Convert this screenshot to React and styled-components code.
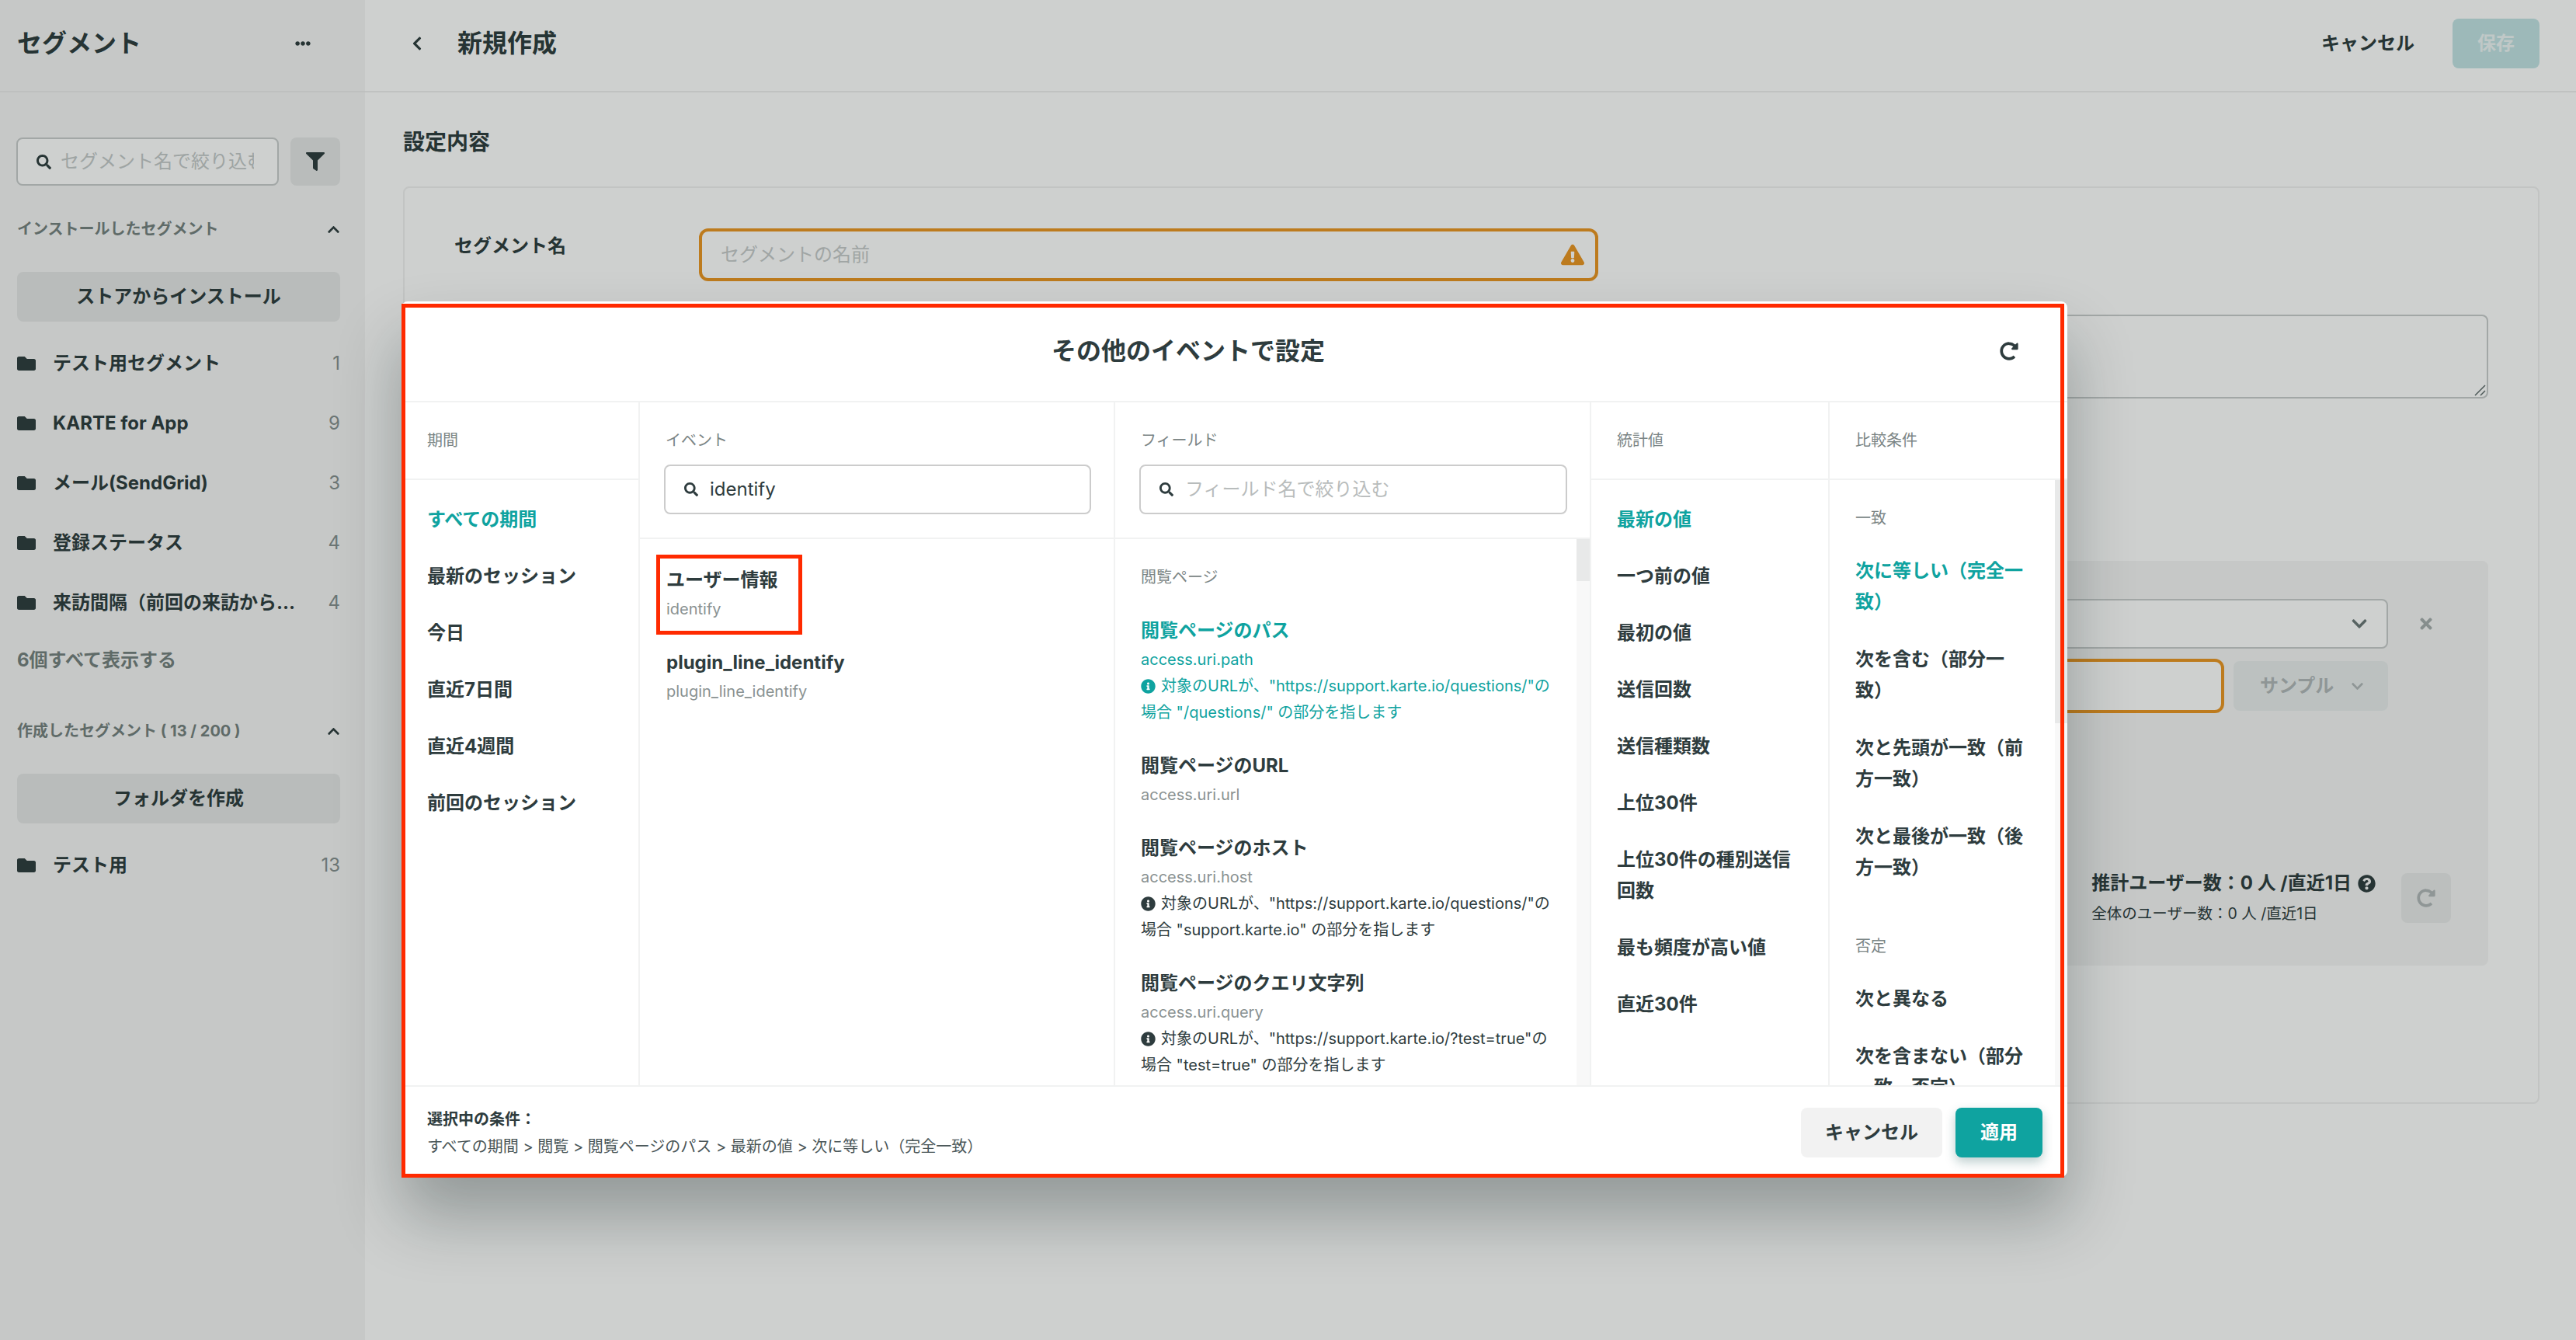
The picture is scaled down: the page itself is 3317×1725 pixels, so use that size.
import styled, { createGlobalStyle } from 'styled-components';
import {
  FaChevronDown,
  FaChevronLeft,
  FaChevronUp,
  FaEllipsisH,
  FaExclamationTriangle,
  FaFilter,
  FaFolder,
  FaInfoCircle,
  FaQuestionCircle,
  FaRedoAlt,
  FaSearch,
  FaTimes,
} from 'react-icons/fa';

const TEAL = '#0fa3a0';
const INK = '#2e3c3e';
const MUTED = '#7b8585';
const LINE = '#f1f2f2';

const installed = [
  ['テスト用セグメント', 1],
  ['KARTE for App', 9],
  ['メール(SendGrid)', 3],
  ['登録ステータス', 4],
  ['来訪間隔（前回の来訪から...', 4],
];

const periods = ['すべての期間', '最新のセッション', '今日', '直近7日間', '直近4週間', '前回のセッション'];

const stats = [
  '最新の値',
  '一つ前の値',
  '最初の値',
  '送信回数',
  '送信種類数',
  '上位30件',
  '上位30件の種別送信回数',
  '最も頻度が高い値',
  '直近30件',
];

const fields = [
  {
    title: '閲覧ページのパス',
    path: 'access.uri.path',
    note: '対象のURLが、"https://support.karte.io/questions/"の場合 "/questions/" の部分を指します',
    active: true,
  },
  { title: '閲覧ページのURL', path: 'access.uri.url' },
  {
    title: '閲覧ページのホスト',
    path: 'access.uri.host',
    note: '対象のURLが、"https://support.karte.io/questions/"の場合 "support.karte.io" の部分を指します',
  },
  {
    title: '閲覧ページのクエリ文字列',
    path: 'access.uri.query',
    note: '対象のURLが、"https://support.karte.io/?test=true"の場合 "test=true" の部分を指します',
  },
];

const App = () => {
  return (
    <>
      <GlobalStyle />
      <Page>
        <Sidebar>
          <SidebarHeader>
            <SidebarTitle>セグメント</SidebarTitle>
            <FaEllipsisH size={20} />
          </SidebarHeader>
          <SidebarBody>
            <SearchRow>
              <SidebarSearch>
                <FaSearch size={19} />
                <input placeholder="セグメント名で絞り込む" readOnly />
              </SidebarSearch>
              <FilterButton>
                <FaFilter size={24} />
              </FilterButton>
            </SearchRow>
            <SectionHead $top={42}>
              インストールしたセグメント
              <FaChevronUp size={17} />
            </SectionHead>
            <WideButton>ストアからインストール</WideButton>
            <FolderList>
              {installed.map(([name, count]) => (
                <FolderRow key={name}>
                  <FaFolder size={24} />
                  <FolderName>{name}</FolderName>
                  <FolderCount>{count}</FolderCount>
                </FolderRow>
              ))}
            </FolderList>
            <ShowAll>6個すべて表示する</ShowAll>
            <SectionHead $top={57}>
              作成したセグメント ( 13 / 200 )
              <FaChevronUp size={17} />
            </SectionHead>
            <WideButton>フォルダを作成</WideButton>
            <FolderList>
              <FolderRow>
                <FaFolder size={24} />
                <FolderName>テスト用</FolderName>
                <FolderCount>13</FolderCount>
              </FolderRow>
            </FolderList>
          </SidebarBody>
        </Sidebar>

        <Main>
          <MainHeader>
            <BackTitle>
              <FaChevronLeft size={20} />
              <PageTitle>新規作成</PageTitle>
            </BackTitle>
            <HeaderActions>
              <PlainAction>キャンセル</PlainAction>
              <SaveButton>保存</SaveButton>
            </HeaderActions>
          </MainHeader>
          <MainBody>
            <SectionTitle>設定内容</SectionTitle>
            <SettingsCard>
              <FieldRow>
                <FieldLabel>セグメント名</FieldLabel>
                <NameInput>
                  セグメントの名前
                  <FaExclamationTriangle size={30} />
                </NameInput>
              </FieldRow>
              <FieldRow $top={43}>
                <FieldLabel>説明</FieldLabel>
                <Description>
                  <ResizeGrip viewBox="0 0 16 16">
                    <path d="M2 15 15 2M9 15l6-6" />
                  </ResizeGrip>
                </Description>
              </FieldRow>
              <ConditionPanel>
                <SelectRow>
                  <SelectBox>
                    <FaChevronDown size={22} />
                  </SelectBox>
                  <RemoveSlot>
                    <FaTimes size={22} />
                  </RemoveSlot>
                </SelectRow>
                <ValueRow>
                  <ValueInput />
                  <SampleButton>
                    サンプル
                    <FaChevronDown size={17} />
                  </SampleButton>
                </ValueRow>
                <EstimateRow>
                  <div>
                    <EstimateMain>
                      推計ユーザー数：0 人 /直近1日
                      <FaQuestionCircle size={23} />
                    </EstimateMain>
                    <EstimateSub>全体のユーザー数：0 人 /直近1日</EstimateSub>
                  </div>
                  <RefreshButton>
                    <FaRedoAlt size={24} />
                  </RefreshButton>
                </EstimateRow>
              </ConditionPanel>
            </SettingsCard>
          </MainBody>
        </Main>

        <Scrim />

        <Modal>
          <ModalHeader>
            <ModalTitle>その他のイベントで設定</ModalTitle>
            <ModalReset>
              <FaRedoAlt size={24} />
            </ModalReset>
          </ModalHeader>
          <ModalColumns>
            <Column>
              <ColumnHead>
                <ColumnLabel>期間</ColumnLabel>
              </ColumnHead>
              <OptionList>
                {periods.map((item, i) => (
                  <Option key={item} $active={i === 0}>
                    {item}
                  </Option>
                ))}
              </OptionList>
            </Column>
            <Column>
              <ColumnHead $tall>
                <ColumnLabel>イベント</ColumnLabel>
                <ColumnSearch>
                  <FaSearch size={18} />
                  identify
                </ColumnSearch>
              </ColumnHead>
              <EventList>
                <EventItem>
                  <Highlight />
                  <ItemTitle>ユーザー情報</ItemTitle>
                  <ItemPath>identify</ItemPath>
                </EventItem>
                <EventItem>
                  <ItemTitle>plugin_line_identify</ItemTitle>
                  <ItemPath>plugin_line_identify</ItemPath>
                </EventItem>
              </EventList>
            </Column>
            <Column>
              <ColumnHead $tall>
                <ColumnLabel>フィールド</ColumnLabel>
                <ColumnSearch $empty>
                  <FaSearch size={18} />
                  フィールド名で絞り込む
                </ColumnSearch>
              </ColumnHead>
              <ScrollArea>
                <FieldList>
                  <ColumnLabel>閲覧ページ</ColumnLabel>
                  {fields.map(field => (
                    <FieldItem key={field.title} $active={field.active}>
                      <ItemTitle>{field.title}</ItemTitle>
                      <ItemPath>{field.path}</ItemPath>
                      {field.note && (
                        <ItemNote>
                          <FaInfoCircle size={19} />
                          {field.note}
                        </ItemNote>
                      )}
                    </FieldItem>
                  ))}
                </FieldList>
                <ScrollTrack $width={17}>
                  <ScrollThumb $height={54} />
                </ScrollTrack>
              </ScrollArea>
            </Column>
            <Column>
              <ColumnHead>
                <ColumnLabel>統計値</ColumnLabel>
              </ColumnHead>
              <OptionList $right={30}>
                {stats.map((item, i) => (
                  <Option key={item} $active={i === 0}>
                    {item}
                  </Option>
                ))}
              </OptionList>
            </Column>
            <Column $last>
              <ColumnHead>
                <ColumnLabel>比較条件</ColumnLabel>
              </ColumnHead>
              <ScrollArea>
                <CompareList>
                  <CompareLabel>一致</CompareLabel>
                  <CompareOption $active>次に等しい（完全一致）</CompareOption>
                  <CompareOption>次を含む（部分一致）</CompareOption>
                  <CompareOption>次と先頭が一致（前方一致）</CompareOption>
                  <CompareOption>次と最後が一致（後方一致）</CompareOption>
                  <CompareLabel $top={50}>否定</CompareLabel>
                  <CompareOption>次と異なる</CompareOption>
                  <CompareOption>次を含まない（部分一致、否定）</CompareOption>
                </CompareList>
                <ScrollTrack $width={16}>
                  <ScrollThumb $height={313} />
                </ScrollTrack>
              </ScrollArea>
            </Column>
          </ModalColumns>
          <ModalFooter>
            <Selection>
              <SelectionTitle>選択中の条件：</SelectionTitle>
              <SelectionPath>すべての期間 &gt; 閲覧 &gt; 閲覧ページのパス &gt; 最新の値 &gt; 次に等しい（完全一致）</SelectionPath>
            </Selection>
            <FooterActions>
              <CancelButton>キャンセル</CancelButton>
              <ApplyButton>適用</ApplyButton>
            </FooterActions>
          </ModalFooter>
          <ModalFrame />
        </Modal>
      </Page>
    </>
  );
};

const GlobalStyle = createGlobalStyle`
  html, body {
    margin: 0;
    background: #fff;
    overflow: hidden;
  }
  * {
    box-sizing: border-box;
  }
  body {
    font-family: Inter, "Noto Sans CJK JP", sans-serif;
    color: ${INK};
    font-size: 24px;
    line-height: 40px;
  }
`;

const Page = styled.div`
  position: relative;
  display: flex;
  width: 3317px;
  height: 1725px;
  overflow: hidden;
`;

const Sidebar = styled.aside`
  width: 470px;
  flex: none;
  background: #f6f6f6;
`;

const SidebarHeader = styled.div`
  height: 119px;
  padding: 0 70px 6px 22px;
  display: flex;
  align-items: center;
  justify-content: space-between;
  border-bottom: 2px solid #ececec;
`;

const SidebarTitle = styled.h1`
  margin: 0;
  font-size: 32px;
  font-weight: 700;
`;

const SidebarBody = styled.div`
  padding: 58px 32px 0 22px;
`;

const SearchRow = styled.div`
  display: flex;
  gap: 15px;
`;

const SidebarSearch = styled.div`
  flex: 1;
  min-width: 0;
  height: 62px;
  margin-left: -1px;
  padding: 0 30px 0 24px;
  display: flex;
  align-items: center;
  gap: 12px;
  background: #fff;
  border: 2px solid #c8cccc;
  border-radius: 8px;

  svg {
    flex: none;
  }

  input {
    flex: 1;
    min-width: 0;
    padding: 0;
    border: 0;
    outline: 0;
    background: none;
    font: inherit;
  }

  input::placeholder {
    color: #c4c9c9;
    opacity: 1;
  }
`;

const FilterButton = styled.div`
  width: 64px;
  height: 62px;
  flex: none;
  display: flex;
  align-items: center;
  justify-content: center;
  background: #e5e6e6;
  border-radius: 8px;
`;

const SectionHead = styled.div`
  margin-top: ${props => props.$top}px;
  display: flex;
  align-items: center;
  justify-content: space-between;
  font-size: 20px;
  line-height: 28px;
  font-weight: 700;
  color: #75817f;

  svg {
    color: ${INK};
  }
`;

const WideButton = styled.div`
  margin-top: 41px;
  height: 64px;
  display: flex;
  align-items: center;
  justify-content: center;
  background: #e5e6e6;
  border-radius: 8px;
  font-weight: 700;
`;

const FolderList = styled.div`
  margin-top: 15px;
`;

const FolderRow = styled.div`
  height: 77px;
  display: flex;
  align-items: center;
  gap: 22px;

  svg {
    flex: none;
  }
`;

const FolderName = styled.span`
  flex: 1;
  font-weight: 700;
  white-space: nowrap;
`;

const FolderCount = styled.span`
  color: #858f8f;
`;

const ShowAll = styled.div`
  margin-top: 16px;
  font-weight: 700;
  color: #75817f;
`;

const Main = styled.main`
  flex: 1;
  min-width: 0;
`;

const MainHeader = styled.header`
  height: 119px;
  padding: 0 47px 6px 57px;
  display: flex;
  align-items: center;
  justify-content: space-between;
  border-bottom: 2px solid #eee;
`;

const BackTitle = styled.div`
  display: flex;
  align-items: center;
  gap: 42px;
`;

const PageTitle = styled.h2`
  margin: 0;
  font-size: 32px;
  font-weight: 700;
`;

const HeaderActions = styled.div`
  display: flex;
  align-items: center;
  gap: 49px;
`;

const PlainAction = styled.span`
  font-weight: 700;
`;

const SaveButton = styled.div`
  width: 112px;
  height: 64px;
  display: flex;
  align-items: center;
  justify-content: center;
  background: #c2e3e4;
  color: #eef6f6;
  border-radius: 8px;
  font-weight: 700;
`;

const MainBody = styled.div`
  padding: 44px 47px 0 49px;
`;

const SectionTitle = styled.h3`
  margin: 0;
  font-size: 28px;
  font-weight: 700;
`;

const SettingsCard = styled.section`
  margin-top: 37px;
  height: 1181px;
  padding: 52px 64px 0;
  border: 2px solid #f0f0f0;
  border-radius: 8px;
`;

const FieldRow = styled.div`
  margin-top: ${props => props.$top || 0}px;
  display: flex;
  align-items: flex-start;
`;

const FieldLabel = styled.label`
  width: 315px;
  flex: none;
  padding-top: 3px;
  font-weight: 700;
`;

const NameInput = styled.div`
  width: 1158px;
  height: 68px;
  padding: 0 14px 0 24px;
  display: flex;
  align-items: center;
  justify-content: space-between;
  border: 4px solid #ea9522;
  border-radius: 12px;
  color: #c6caca;

  svg {
    color: #ea9522;
  }
`;

const Description = styled.div`
  position: relative;
  flex: 1;
  height: 108px;
  border: 2px solid #c8cccc;
  border-radius: 8px;
`;

const ResizeGrip = styled.svg`
  position: absolute;
  right: 1px;
  bottom: 1px;
  width: 16px;
  height: 16px;
  fill: none;
  stroke: #5f6b6b;
  stroke-width: 1.5;
`;

const ConditionPanel = styled.div`
  margin-top: 209px;
  height: 521px;
  padding: 49px 48px 47px 65px;
  background: #f5f5f5;
  border-radius: 8px;
  display: flex;
  flex-direction: column;
`;

const SelectRow = styled.div`
  display: flex;
  align-items: center;
`;

const SelectBox = styled.div`
  flex: 1;
  height: 64px;
  padding: 0 24px;
  display: flex;
  align-items: center;
  justify-content: flex-end;
  background: #fff;
  border: 2px solid #c8cccc;
  border-radius: 8px;
  color: #6b7777;
`;

const RemoveSlot = styled.div`
  width: 81px;
  flex: none;
  padding-left: 38px;
  display: flex;
  color: #a5adad;
`;

const ValueRow = styled.div`
  margin-top: 13px;
  padding-right: 81px;
  display: flex;
  align-items: center;
  gap: 12px;
`;

const ValueInput = styled.div`
  flex: 1;
  height: 70px;
  background: #fff;
  border: 4px solid #ea9522;
  border-radius: 12px;
`;

const SampleButton = styled.div`
  width: 199px;
  height: 64px;
  flex: none;
  padding-left: 34px;
  display: flex;
  align-items: center;
  gap: 22px;
  background: #e9eded;
  border-radius: 8px;
  color: #b1b7b8;
  font-weight: 700;
`;

const EstimateRow = styled.div`
  margin-top: auto;
  display: flex;
  align-items: center;
  justify-content: flex-end;
  gap: 33px;
`;

const EstimateMain = styled.div`
  margin-top: 2px;
  display: flex;
  align-items: center;
  gap: 8px;
  line-height: 38px;
  font-weight: 700;
`;

const EstimateSub = styled.div`
  font-size: 19.5px;
  line-height: 40px;
`;

const RefreshButton = styled.div`
  width: 64px;
  height: 64px;
  display: flex;
  align-items: center;
  justify-content: center;
  background: #e9eaea;
  border-radius: 8px;
  color: #b1b7b8;
`;

const Scrim = styled.div`
  position: absolute;
  inset: 0;
  background: rgba(8, 18, 13, 0.2);
`;

const Modal = styled.div`
  position: absolute;
  left: 517px;
  top: 388px;
  width: 2145px;
  height: 1127px;
  display: flex;
  flex-direction: column;
  background: #fff;
  border-radius: 8px;
  box-shadow: 0 50px 84px rgba(10, 25, 25, 0.3);
`;

const ModalFrame = styled.div`
  position: absolute;
  left: 0;
  top: 3px;
  width: 2141px;
  height: 1125px;
  border: 5px solid #ff2a00;
  pointer-events: none;
`;

const ModalHeader = styled.div`
  height: 130px;
  flex: none;
  display: flex;
  align-items: center;
  border-bottom: 2px solid ${LINE};
`;

const ModalTitle = styled.h2`
  flex: 1;
  margin: 0;
  text-align: center;
  font-size: 32px;
  font-weight: 700;
`;

const ModalReset = styled.div`
  width: 119px;
  flex: none;
  padding-left: 32px;
  display: flex;
`;

const ModalColumns = styled.div`
  flex: 1;
  min-height: 0;
  display: grid;
  grid-template-columns: 307px 612px 613px 307px 306px;
`;

const Column = styled.div`
  min-width: 0;
  display: flex;
  flex-direction: column;
  overflow: hidden;
  border-right: ${props => (props.$last ? 'none' : `2px solid ${LINE}`)};
`;

const ColumnHead = styled.div`
  height: ${props => (props.$tall ? 176 : 100)}px;
  flex: none;
  padding: 35px ${props => (props.$tall ? 29 : 0)}px 0 33px;
  border-bottom: 2px solid ${LINE};
`;

const ColumnLabel = styled.div`
  font-size: 20px;
  line-height: 28px;
  color: ${MUTED};
`;

const ColumnSearch = styled.div`
  margin-top: 17px;
  margin-left: -2px;
  height: 64px;
  padding: 0 24px;
  display: flex;
  align-items: center;
  gap: 15px;
  border: 2px solid #ccc;
  border-radius: 8px;
  color: ${props => (props.$empty ? '#b8bcbc' : INK)};

  svg {
    color: ${INK};
    flex: none;
  }
`;

const OptionList = styled.div`
  padding: 15px ${props => props.$right || 20}px 0 33px;
`;

const Option = styled.div`
  padding: 16px 0 17px;
  font-weight: 700;
  color: ${props => (props.$active ? TEAL : INK)};
`;

const CompareOption = styled(Option)`
  padding: 17px 0;
`;

const EventList = styled.div`
  padding: 33px 20px 0 34px;
`;

const EventItem = styled.div`
  position: relative;
  margin-bottom: 32px;
`;

const Highlight = styled.div`
  position: absolute;
  left: -13px;
  top: -13px;
  width: 188px;
  height: 103px;
  border: 5px solid #ff2a00;
`;

const ItemTitle = styled.div`
  font-weight: 700;
`;

const ItemPath = styled.div`
  font-size: 20px;
  line-height: 34px;
  color: #8a9292;
`;

const ScrollArea = styled.div`
  flex: 1;
  min-height: 0;
  display: flex;
  overflow: hidden;
`;

const FieldList = styled.div`
  flex: 1;
  min-width: 0;
  padding: 35px 26px 0 33px;
`;

const FieldItem = styled.div`
  margin-top: 35px;
  color: ${props => (props.$active ? TEAL : 'inherit')};

  & + & {
    margin-top: 32px;
  }

  ${ItemPath} {
    color: ${props => (props.$active ? TEAL : '#8a9292')};
  }
`;

const ItemNote = styled.div`
  font-size: 20px;
  line-height: 34px;
  color: ${props => props.$active || '#8a9292'};

  ${FieldItem} & {
    color: inherit;
  }

  svg {
    margin-right: 7px;
    vertical-align: -3px;
  }
`;

const ScrollTrack = styled.div`
  width: ${props => props.$width}px;
  flex: none;
  background: #f8f8f8;
`;

const ScrollThumb = styled.div`
  height: ${props => props.$height}px;
  background: #e8e9e9;
`;

const CompareList = styled.div`
  flex: 1;
  min-width: 0;
  padding: 35px 40px 0 33px;
`;

const CompareLabel = styled.div`
  margin-top: ${props => props.$top || 0}px;
  margin-bottom: 17px;
  font-size: 20px;
  line-height: 28px;
  color: ${MUTED};
`;

const ModalFooter = styled.div`
  height: 118px;
  flex: none;
  padding: 27px 32px 0 33px;
  display: flex;
  justify-content: space-between;
  border-top: 2px solid ${LINE};
`;

const Selection = styled.div`
  margin-top: -2px;
  font-size: 20px;
  line-height: 35px;
`;

const SelectionTitle = styled.div`
  font-weight: 700;
`;

const SelectionPath = styled.div`
  color: #4a5658;
`;

const FooterActions = styled.div`
  display: flex;
  gap: 17px;
`;

const CancelButton = styled.div`
  width: 182px;
  height: 64px;
  display: flex;
  align-items: center;
  justify-content: center;
  background: #f2f2f2;
  border-radius: 8px;
  font-weight: 700;
`;

const ApplyButton = styled(CancelButton)`
  width: 112px;
  background: ${TEAL};
  color: #fff;
  box-shadow: 0 6px 14px rgba(15, 80, 80, 0.28);
`;

export default App;
